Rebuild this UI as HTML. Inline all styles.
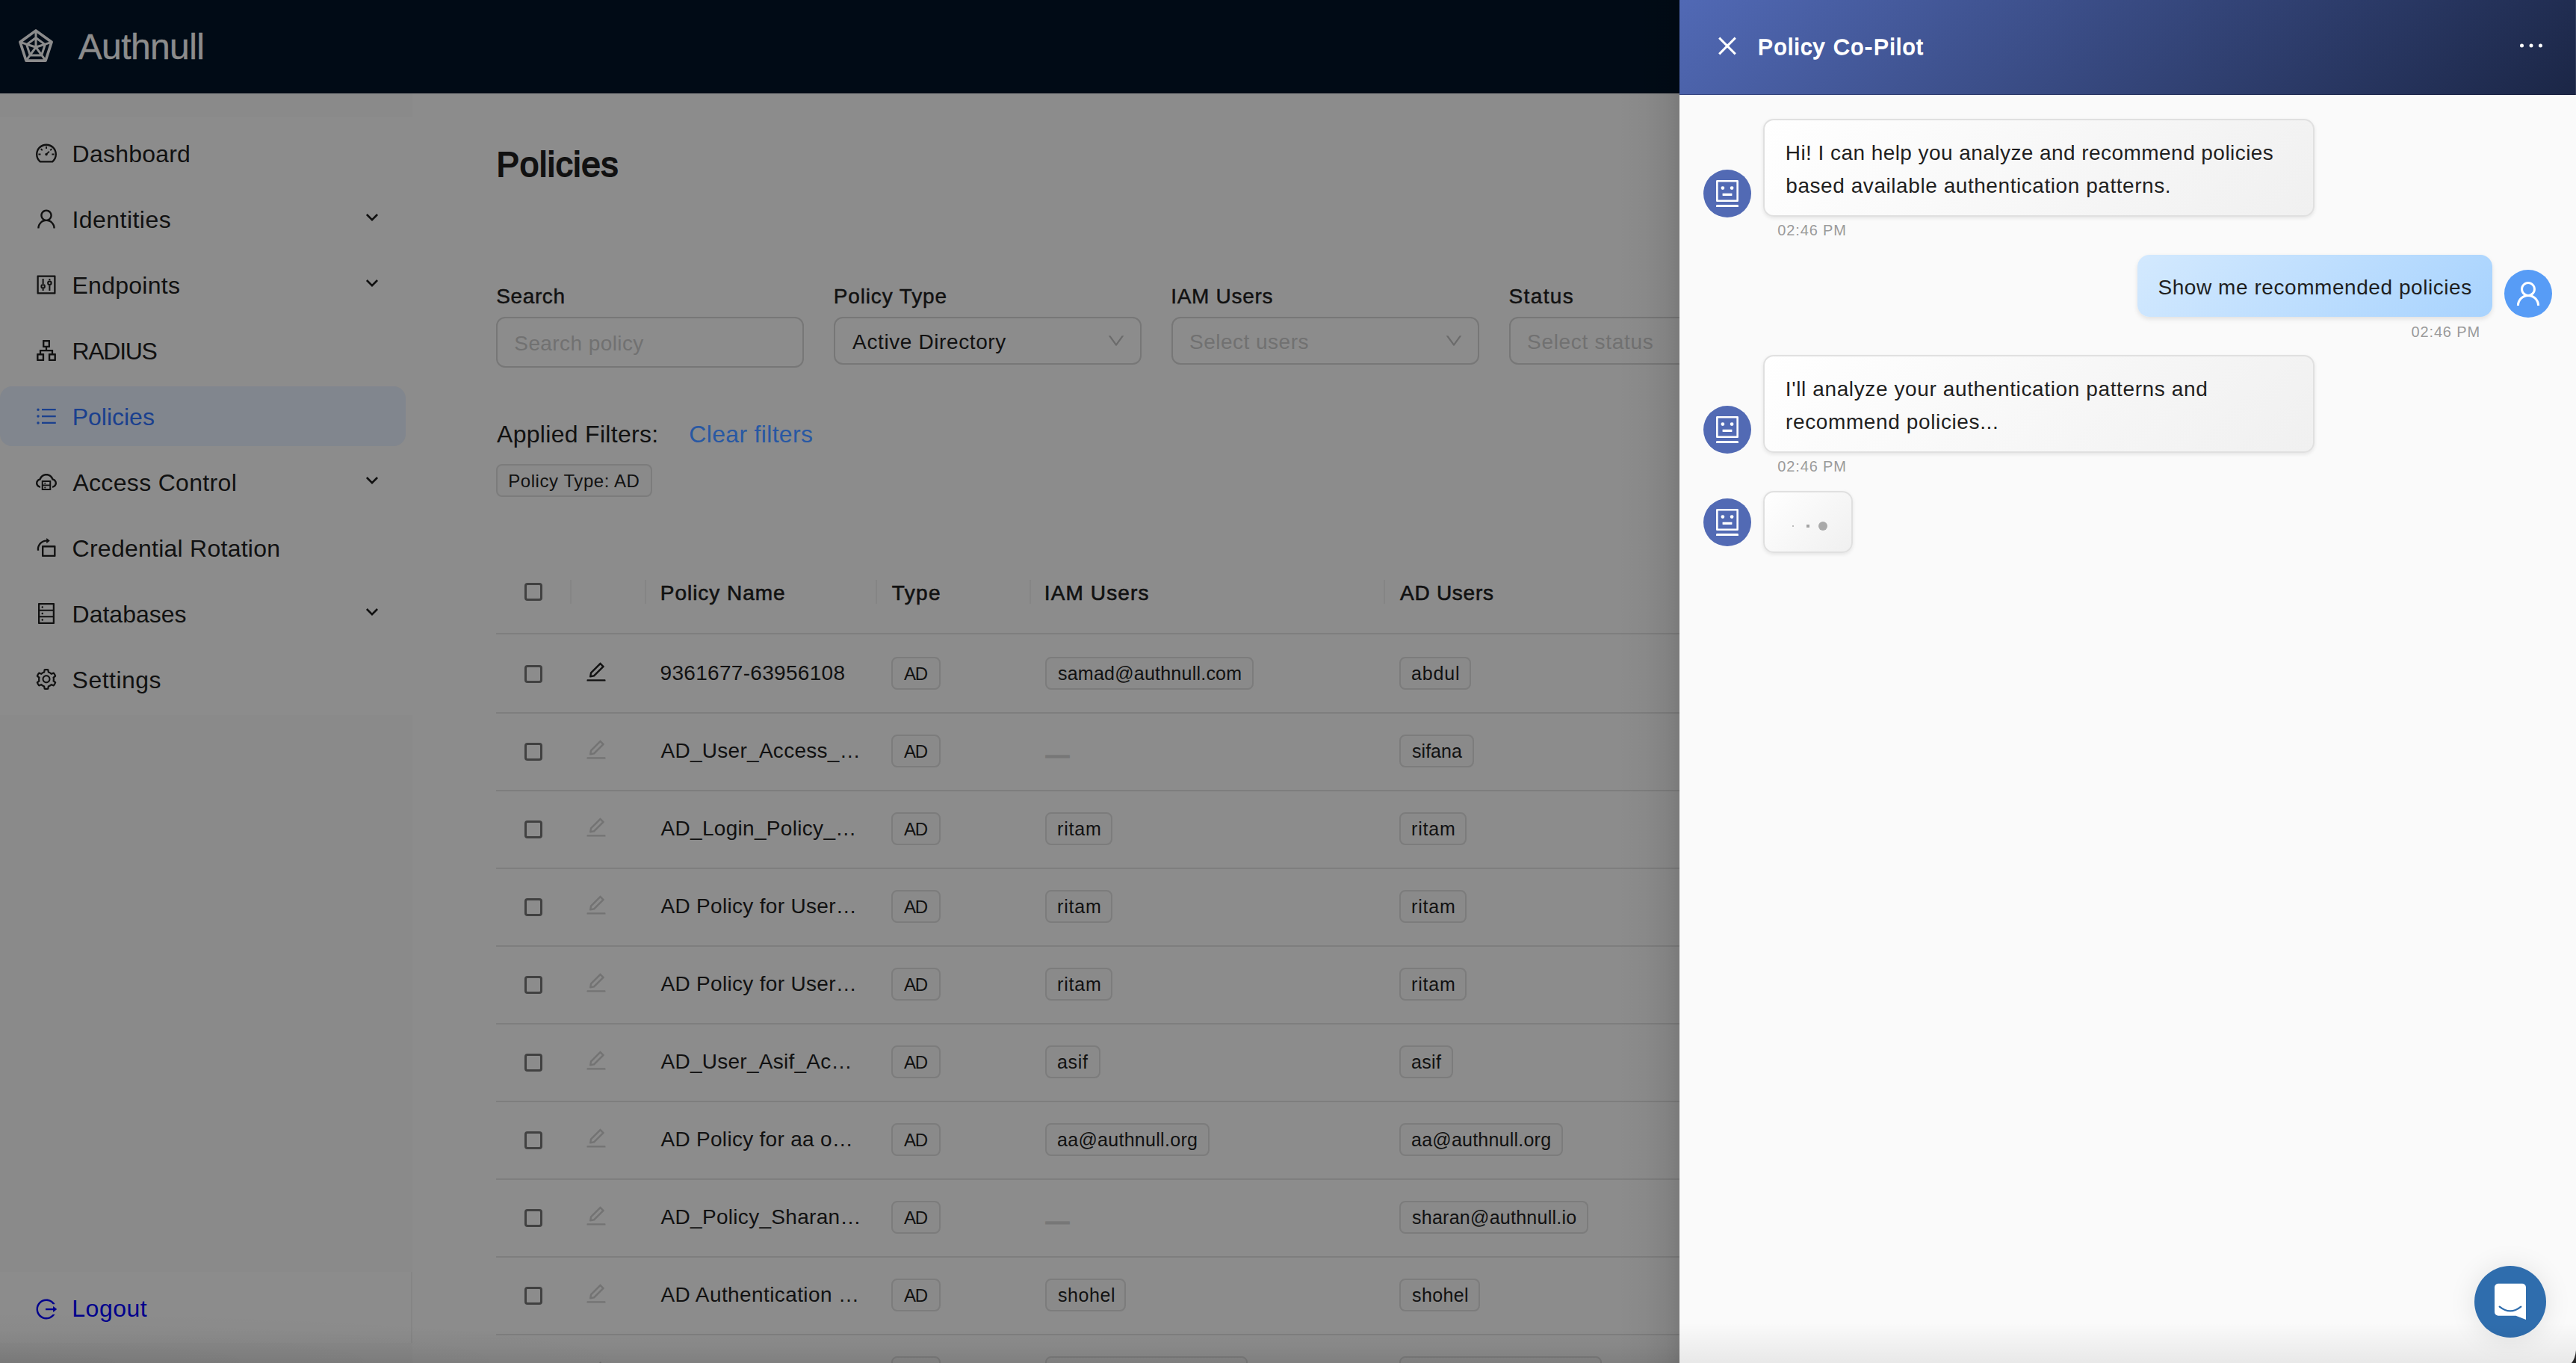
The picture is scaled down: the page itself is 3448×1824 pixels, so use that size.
<!DOCTYPE html>
<html lang="en"><head><meta charset="utf-8"><title>Authnull - Policies</title><style>
html,body{margin:0;padding:0}
body{width:3448px;height:1824px;overflow:hidden;background:#8c8c8c;font-family:"Liberation Sans",sans-serif;position:relative}
.a{position:absolute}
.bx{box-sizing:border-box}
.ic{position:absolute;display:block;overflow:visible}
.t{position:absolute;margin:0;white-space:pre;line-height:1;font-weight:400;text-decoration:none;font-kerning:normal}
</style></head><body>
<header class="topbar">
<div class="a bar" style="left:0px;top:0px;width:2248px;height:125px;background:#010b16"></div>
<svg class="ic logo" style="left:24px;top:37px;width:48px;height:48px" viewBox="64 64 896 896" fill="#8c8c8c" fill-rule="evenodd" ><path d="M926.8 397.1l-396-288a31.81 31.81 0 00-37.6 0l-396 288a31.99 31.99 0 00-11.600 35.800l151.300 466a32 32 0 0030.400 22.100h489.500c13.900 0 26.100-8.900 30.400-22.100l151.300-466c4.200-13.200-.5-27.600-11.700-35.800zM838.600 417l-98.500 32-200-144.700V199.900L838.600 417zM466 567.200l-89.100 122.300-55.200-169.200L466 567.200zm-116.300-96.800L484 373.300v140.800l-134.300-43.700zM512 599.200l93.900 128.900H418.100L512 599.200zm28.100-225.900l134.200 97.100L540.100 514V373.300zM558 567.200l144.300-46.900-55.200 169.200L558 567.200zm-74-367.300v104.400L283.900 449l-98.500-32L484 199.900zM169.300 470.800l86.500 28.100 80.400 246.400-53.800 73.900-113.100-348.400zM327.100 853l50.300-69h269.300l50.300 69H327.100zm414.500-33.800l-53.800-73.900 80.400-246.400 86.500-28.100-113.100 348.400z"/></svg>
<span class="t brand" style="left:104.7px;top:39px;font-size:48px;color:#8c8c8c;letter-spacing:-0.61px;-webkit-text-stroke:0.4px #8c8c8c;">Authnull</span>
</header>
<nav class="sider">
<div class="a sider-bg" style="left:0px;top:125px;width:552px;height:1699px;background:#8a8a8a"></div>
<div class="a menu-bg" style="left:0px;top:157px;width:552px;height:800px;background:#8c8c8c"></div>
<div class="a menu-selected" style="left:0px;top:517px;width:543px;height:80px;background:#81868e;border-radius:16px"></div>
<svg class="ic " style="left:48px;top:191px;width:28px;height:28px" viewBox="64 64 896 896" fill="#111111" fill-rule="evenodd" ><path d="M924.8 385.600a446.700 446.700 0 00-96-142.400 446.700 446.700 0 00-142.400-96C631.100 123.800 572.500 112 512 112s-119.100 11.800-174.400 35.200a446.700 446.700 0 00-142.400 96 446.700 446.700 0 00-96 142.400C75.800 440.900 64 499.500 64 560c0 132.700 58.300 257.700 159.900 343.100l1.700 1.400c5.800 4.800 13.100 7.500 20.600 7.500h531.700c7.500 0 14.800-2.700 20.600-7.500l1.700-1.400C901.700 817.700 960 692.700 960 560c0-60.500-11.900-119.100-35.200-174.400zM761.400 836H262.600A371.120 371.120 0 01140 560c0-99.400 38.700-192.800 109-263 70.300-70.300 163.700-109 263-109 99.400 0 192.800 38.700 263 109 70.300 70.300 109 163.700 109 263 0 105.600-44.500 205.500-122.600 276zM623.500 421.500a8.030 8.030 0 00-11.300 0L527.700 506c-18.700-5-39.400-.2-54.100 14.500a55.950 55.950 0 000 79.200 55.950 55.950 0 0079.200 0 55.870 55.870 0 0014.500-54.100l84.500-84.500c3.100-3.100 3.100-8.200 0-11.300l-28.300-28.300zM490 320h44c4.400 0 8-3.600 8-8v-80c0-4.400-3.600-8-8-8h-44c-4.400 0-8 3.600-8 8v80c0 4.400 3.600 8 8 8zm260 218v44c0 4.400 3.600 8 8 8h80c4.400 0 8-3.600 8-8v-44c0-4.400-3.600-8-8-8h-80c-4.400 0-8 3.600-8 8zm12.700-197.200l-31.100-31.100a8.030 8.030 0 00-11.300 0l-56.600 56.600a8.030 8.030 0 000 11.300l31.100 31.100c3.100 3.100 8.200 3.100 11.300 0l56.600-56.600c3.100-3.100 3.100-8.200 0-11.300zm-458.600-31.100a8.030 8.030 0 00-11.300 0l-31.100 31.100a8.030 8.030 0 000 11.300l56.600 56.600c3.100 3.100 8.200 3.100 11.300 0l31.100-31.100c3.100-3.100 3.100-8.200 0-11.300l-56.600-56.600zM262 530h-80c-4.400 0-8 3.600-8 8v44c0 4.400 3.600 8 8 8h80c4.400 0 8-3.600 8-8v-44c0-4.400-3.600-8-8-8z"/></svg>
<span class="t menu-item" style="left:96.6px;top:190px;font-size:32px;color:#111111;letter-spacing:0.21px;">Dashboard</span>
<svg class="ic " style="left:48px;top:279px;width:28px;height:28px" viewBox="64 64 896 896" fill="#111111" fill-rule="evenodd" ><path d="M858.500 763.600a374 374 0 00-80.600-119.500 375.630 375.630 0 00-119.500-80.600c-.4-.2-.8-.3-1.200-.5C719.500 518 760 444.700 760 362c0-137-111-248-248-248S264 225 264 362c0 82.700 40.500 156 102.800 201.100-.4.200-.8.300-1.200.5-44.800 18.900-85 46-119.500 80.600a375.630 375.630 0 00-80.600 119.500A371.700 371.700 0 00136 901.800a8 8 0 008 8.200h60c4.400 0 7.900-3.500 8-7.800 2-77.200 33-149.500 87.800-204.300 56.700-56.700 132-87.900 212.200-87.900s155.500 31.200 212.200 87.900C779 752.700 810 825 812 902.200c.1 4.400 3.600 7.800 8 7.800h60a8 8 0 008-8.200c-1-47.800-10.900-94.300-29.500-138.200zM512 534c-45.900 0-89.100-17.900-121.600-50.400S340 407.900 340 362c0-45.900 17.900-89.100 50.400-121.600S466.100 190 512 190s89.100 17.900 121.600 50.400S684 316.100 684 362c0 45.900-17.900 89.100-50.400 121.600S557.900 534 512 534z"/></svg>
<span class="t menu-item" style="left:96.4px;top:278px;font-size:32px;color:#111111;letter-spacing:0.47px;">Identities</span>
<svg class="ic" style="left:486px;top:281px;width:24px;height:20px" viewBox="0 0 24 20"><path d="M4.9 6L12 13.100L19.100 6" fill="none" stroke="#111111" stroke-width="2.600"/></svg>
<svg class="ic " style="left:48px;top:367px;width:28px;height:28px" viewBox="64 64 896 896" fill="#111111" fill-rule="evenodd" ><path d="M880 112H144c-17.700 0-32 14.300-32 32v736c0 17.700 14.300 32 32 32h736c17.700 0 32-14.300 32-32V144c0-17.700-14.300-32-32-32zm-40 728H184V184h656v656zM340 256h64v236h-64zM340 676h64v92h-64zM620 256h64v92h-64zM620 532h64v236h-64zM372 480a104 104 0 100 208 104 104 0 100-208zm0 64a40 40 0 110 80 40 40 0 110-80zM652 336a104 104 0 100 208 104 104 0 100-208zm0 64a40 40 0 110 80 40 40 0 110-80z"/></svg>
<span class="t menu-item" style="left:96.5px;top:366px;font-size:32px;color:#111111;letter-spacing:0.26px;">Endpoints</span>
<svg class="ic" style="left:486px;top:369px;width:24px;height:20px" viewBox="0 0 24 20"><path d="M4.9 6L12 13.100L19.100 6" fill="none" stroke="#111111" stroke-width="2.600"/></svg>
<svg class="ic " style="left:48px;top:455px;width:28px;height:28px" viewBox="64 64 896 896" fill="#111111" fill-rule="evenodd" ><path d="M908 640H804V488c0-4.400-3.600-8-8-8H548v-96h108c8.800 0 16-7.200 16-16V80c0-8.800-7.200-16-16-16H368c-8.800 0-16 7.200-16 16v288c0 8.800 7.200 16 16 16h108v96H228c-4.400 0-8 3.600-8 8v152H116c-8.800 0-16 7.200-16 16v288c0 8.800 7.200 16 16 16h288c8.800 0 16-7.200 16-16V656c0-8.800-7.200-16-16-16H292v-88h440v88H620c-8.800 0-16 7.200-16 16v288c0 8.800 7.200 16 16 16h288c8.800 0 16-7.200 16-16V656c0-8.800-7.200-16-16-16zm-564 76v168H176V716h168zm84-408V140h168v168H428zm420 576H680V716h168v168z"/></svg>
<span class="t menu-item" style="left:96.5px;top:454px;font-size:32px;color:#111111;letter-spacing:-1.29px;">RADIUS</span>
<svg class="ic " style="left:48px;top:543px;width:28px;height:28px" viewBox="64 64 896 896" fill="#1a408e" fill-rule="evenodd" ><path d="M912 192H328c-4.400 0-8 3.600-8 8v56c0 4.400 3.600 8 8 8h584c4.400 0 8-3.600 8-8v-56c0-4.400-3.600-8-8-8zm0 284H328c-4.400 0-8 3.600-8 8v56c0 4.400 3.600 8 8 8h584c4.400 0 8-3.600 8-8v-56c0-4.400-3.600-8-8-8zm0 284H328c-4.400 0-8 3.600-8 8v56c0 4.400 3.600 8 8 8h584c4.400 0 8-3.600 8-8v-56c0-4.400-3.600-8-8-8zM104 228a56 56 0 10112 0 56 56 0 10-112 0zm0 284a56 56 0 10112 0 56 56 0 10-112 0zm0 284a56 56 0 10112 0 56 56 0 10-112 0z"/></svg>
<span class="t menu-item" style="left:96.7px;top:542px;font-size:32px;color:#1a408e;letter-spacing:-0.01px;">Policies</span>
<svg class="ic " style="left:48px;top:631px;width:28px;height:28px" viewBox="64 64 896 896" fill="#111111" fill-rule="evenodd" ><path d="M704 446H320c-4.400 0-8 3.600-8 8v402c0 4.400 3.600 8 8 8h384c4.400 0 8-3.600 8-8V454c0-4.400-3.600-8-8-8zm-328 64h272v117H376V510zm272 290H376V683h272v117zM424 748a32 32 0 1064 0 32 32 0 10-64 0zm0-178a32 32 0 1064 0 32 32 0 10-64 0zM811.400 368.900C765.600 248 648.900 162 512.200 162S258.800 247.900 213 368.800C126.900 391.500 63.500 470.200 64 563.600 64.600 668 145.600 752.900 247.600 762c4.700.4 8.700-3.300 8.700-8v-60.400c0-4-3-7.400-7-7.900-27-3.400-52.500-15.200-72.100-34.500-24-23.500-37.200-55.100-37.200-88.600 0-28 9.100-54.400 26.200-76.400 16.700-21.400 40.200-36.900 66.100-43.700l37.900-10 13.900-36.700c8.600-22.800 20.600-44.200 35.700-63.500 14.900-19.200 32.600-36 52.400-50 41.100-28.900 89.500-44.200 140-44.200s98.900 15.300 140 44.300c19.900 14 37.500 30.800 52.400 50 15.100 19.300 27.100 40.700 35.700 63.500l13.800 36.600 37.800 10c54.200 14.400 92.100 63.700 92.100 120 0 33.600-13.200 65.100-37.200 88.600-19.500 19.200-44.900 31.100-71.900 34.500-4 .5-6.900 3.900-6.900 7.900V754c0 4.700 4.100 8.400 8.800 8 101.700-9.200 182.500-94 183.200-198.200.6-93.400-62.700-172.100-148.600-194.900z"/></svg>
<span class="t menu-item" style="left:97.4px;top:630px;font-size:32px;color:#111111;letter-spacing:0.32px;">Access Control</span>
<svg class="ic" style="left:486px;top:633px;width:24px;height:20px" viewBox="0 0 24 20"><path d="M4.9 6L12 13.100L19.100 6" fill="none" stroke="#111111" stroke-width="2.600"/></svg>
<svg class="ic " style="left:48px;top:719px;width:28px;height:28px" viewBox="64 64 896 896" fill="#111111" fill-rule="evenodd" transform="scale(-1,1)"><path d="M672 418H144c-17.700 0-32 14.300-32 32v414c0 17.700 14.300 32 32 32h528c17.700 0 32-14.300 32-32V450c0-17.700-14.300-32-32-32zm-44 402H188V494h440v326zM819.300 328.500c-78.800-100.700-196-153.600-314.600-154.200l-.2-64c0-6.500-7.600-10.100-12.600-6.100l-128 101c-4 3.100-3.900 9.100 0 12.300L492 318.600c5.100 4 12.700.4 12.600-6.100v-63.900c12.900.1 25.900.9 38.800 2.500 42.100 5.200 82.100 18.200 119 38.700 38.100 21.200 71.200 49.700 98.400 84.300 27.100 34.700 46.700 73.700 58.100 115.800a325.950 325.950 0 016.500 140.900h74.900c14.800-103.600-11.300-213-81-302.300z"/></svg>
<span class="t menu-item" style="left:96.6px;top:718px;font-size:32px;color:#111111;letter-spacing:0.25px;">Credential Rotation</span>
<svg class="ic " style="left:48px;top:807px;width:28px;height:28px" viewBox="64 64 896 896" fill="#111111" fill-rule="evenodd" ><path d="M832 64H192c-17.700 0-32 14.300-32 32v832c0 17.700 14.300 32 32 32h640c17.700 0 32-14.300 32-32V96c0-17.700-14.300-32-32-32zm-600 72h560v208H232V136zm560 480H232V408h560v208zm0 272H232V680h560v208zM304 240a40 40 0 1080 0 40 40 0 10-80 0zm0 272a40 40 0 1080 0 40 40 0 10-80 0zm0 272a40 40 0 1080 0 40 40 0 10-80 0z"/></svg>
<span class="t menu-item" style="left:96.6px;top:806px;font-size:32px;color:#111111;letter-spacing:-0.01px;">Databases</span>
<svg class="ic" style="left:486px;top:809px;width:24px;height:20px" viewBox="0 0 24 20"><path d="M4.9 6L12 13.100L19.100 6" fill="none" stroke="#111111" stroke-width="2.600"/></svg>
<svg class="ic " style="left:48px;top:895px;width:28px;height:28px" viewBox="64 64 896 896" fill="#111111" fill-rule="evenodd" ><path d="M924.8 625.700l-65.500-56c3.100-19 4.700-38.400 4.700-57.800s-1.600-38.800-4.700-57.800l65.500-56a32.030 32.030 0 009.300-35.200l-.9-2.600a442.090 442.090 0 00-79.700-137.900l-1.800-2.100a32.120 32.120 0 00-35.100-9.500l-81.300 28.900c-30-24.600-63.500-44-99.700-57.600l-15.700-85a32.050 32.050 0 00-25.800-25.700l-2.700-.5c-52.100-9.400-106.900-9.400-159 0l-2.700.5a32.050 32.050 0 00-25.800 25.700l-15.800 85.400a351.860 351.860 0 00-99 57.400l-81.900-29.100a32 32 0 00-35.100 9.500l-1.800 2.100a446.020 446.020 0 00-79.700 137.900l-.9 2.600c-4.500 12.500-.8 26.500 9.300 35.200l66.300 56.600c-3.100 18.800-4.600 38-4.600 57.100 0 19.200 1.500 38.400 4.600 57.100L99 625.500a32.030 32.030 0 00-9.300 35.200l.9 2.600c18.100 50.400 44.900 96.900 79.700 137.900l1.800 2.100a32.120 32.120 0 0035.100 9.500l81.900-29.100c29.800 24.500 63.100 43.900 99 57.400l15.800 85.400a32.050 32.050 0 0025.800 25.700l2.700.5a449.400 449.400 0 00159 0l2.700-.5a32.050 32.050 0 0025.800-25.700l15.700-85a350 350 0 0099.700-57.600l81.300 28.900a32 32 0 0035.100-9.500l1.800-2.100c34.800-41.100 61.600-87.500 79.700-137.900l.9-2.600c4.500-12.300.8-26.300-9.300-35zM788.300 465.900c2.500 15.100 3.800 30.600 3.800 46.100s-1.300 31-3.800 46.100l-6.600 40.100 74.700 63.900a370.030 370.030 0 01-42.600 73.600L721 702.800l-31.400 25.800c-23.900 19.600-50.500 35-79.300 45.800l-38.100 14.300-17.900 97a377.500 377.500 0 01-85 0l-17.900-97.200-37.800-14.500c-28.500-10.800-55-26.200-78.700-45.700l-31.400-25.900-93.400 33.200c-17-22.900-31.200-47.600-42.600-73.600l75.500-64.500-6.500-40c-2.400-14.900-3.700-30.300-3.700-45.500 0-15.300 1.200-30.600 3.700-45.500l6.500-40-75.500-64.500c11.300-26.100 25.600-50.700 42.600-73.600l93.400 33.200 31.400-25.900c23.700-19.500 50.200-34.900 78.700-45.700l37.900-14.300 17.900-97.200c28.100-3.200 56.800-3.200 85 0l17.900 97 38.100 14.300c28.700 10.800 55.400 26.200 79.300 45.800l31.400 25.800 92.800-32.900c17 22.900 31.200 47.600 42.600 73.600L781.800 426l6.500 39.900zM512 326c-97.200 0-176 78.800-176 176s78.800 176 176 176 176-78.800 176-176-78.800-176-176-176zm79.200 255.200A111.600 111.600 0 01512 614c-29.900 0-58-11.700-79.200-32.800A111.600 111.600 0 01400 502c0-29.900 11.700-58 32.800-79.200C454 401.600 482.100 390 512 390c29.900 0 58 11.600 79.200 32.800A111.600 111.600 0 01624 502c0 29.900-11.700 58-32.800 79.200z"/></svg>
<span class="t menu-item" style="left:96.6px;top:894px;font-size:32px;color:#111111;letter-spacing:0.48px;">Settings</span>
<div class="a bx logout-bg" style="left:0px;top:1702px;width:552px;height:95px;background:#8c8c8c;border-right:2px solid #858585"></div>
<svg class="ic " style="left:48px;top:1738px;width:28px;height:28px" viewBox="64 64 896 896" fill="#00008c" fill-rule="evenodd" ><path d="M868 732h-70.300c-4.800 0-9.300 2.100-12.300 5.800-7 8.500-14.500 16.700-22.400 24.500a353.840 353.840 0 01-112.700 75.900A352.800 352.800 0 01512.400 866c-47.900 0-94.300-9.400-137.900-27.800a353.840 353.840 0 01-112.700-75.900 353.280 353.280 0 01-76-112.500C167.300 606.200 158 559.900 158 512s9.400-94.200 27.800-137.800c17.800-42.100 43.400-80 76-112.500s70.500-58.100 112.700-75.900c43.600-18.400 90-27.800 137.900-27.800 47.900 0 94.300 9.300 137.900 27.800 42.200 17.800 80.100 43.400 112.700 75.900 7.900 7.900 15.300 16.100 22.400 24.500 3 3.700 7.600 5.800 12.300 5.800H868c6.300 0 10.200-7 6.700-12.300C798 160.500 663.800 81.600 511.300 82 271.700 82.600 79.600 277.100 82 516.400 84.400 751.900 276.200 942 512.400 942c152.100 0 285.700-78.800 362.300-197.700 3.400-5.300-.4-12.300-6.700-12.300zm88.900-226.300L815 393.700c-5.300-4.200-13-.4-13 6.300v76H488c-4.400 0-8 3.600-8 8v56c0 4.400 3.600 8 8 8h314v76c0 6.700 7.800 10.500 13 6.300l141.900-112a8 8 0 000-12.600z"/></svg>
<span class="t menu-item" style="left:96.3px;top:1735px;font-size:32px;color:#00008c;letter-spacing:0.5px;">Logout</span>
</nav>
<main class="content">
<h1 class="t" style="left:664.4px;top:197px;font-size:46px;color:#111111;letter-spacing:0.64px;-webkit-text-stroke:1.9px #111111;">Policies</h1>
<label class="t" style="left:664.2px;top:383px;font-size:28px;color:#111111;letter-spacing:0.63px;-webkit-text-stroke:0.45px #111111;">Search</label>
<label class="t" style="left:1115.7px;top:383px;font-size:28px;color:#111111;letter-spacing:0.87px;-webkit-text-stroke:0.45px #111111;">Policy Type</label>
<label class="t" style="left:1567.25px;top:383px;font-size:28px;color:#111111;letter-spacing:0.7px;-webkit-text-stroke:0.45px #111111;">IAM Users</label>
<label class="t" style="left:2019.5px;top:383px;font-size:28px;color:#111111;letter-spacing:1.38px;-webkit-text-stroke:0.45px #111111;">Status</label>
<div class="a bx input" style="left:664px;top:424px;width:412px;height:68px;border:2px solid #777777;border-radius:12px"></div>
<span class="t placeholder" style="left:688.3px;top:446px;font-size:28px;color:#717171;letter-spacing:0.41px;">Search policy</span>
<div class="a bx select" style="left:1116px;top:424px;width:412px;height:64px;border:2px solid #777777;border-radius:12px"></div>
<svg class="ic " style="left:1482px;top:444px;width:24px;height:24px" viewBox="64 64 896 896" fill="#6b6b6b" fill-rule="evenodd" ><path d="M884 256h-75c-5.100 0-9.900 2.400-12.900 6.500L512 654.200 227.900 262.500c-3-4.100-7.800-6.500-12.900-6.500h-75c-6.500 0-10.300 7.400-6.500 12.700l352.600 486.100c12.800 17.600 39 17.600 51.700 0l352.600-486.100c3.900-5.300.1-12.700-6.400-12.700z"/></svg>
<div class="a bx select" style="left:1568px;top:424px;width:412px;height:64px;border:2px solid #777777;border-radius:12px"></div>
<svg class="ic " style="left:1934px;top:444px;width:24px;height:24px" viewBox="64 64 896 896" fill="#6b6b6b" fill-rule="evenodd" ><path d="M884 256h-75c-5.100 0-9.900 2.400-12.900 6.500L512 654.200 227.900 262.500c-3-4.100-7.800-6.500-12.900-6.500h-75c-6.500 0-10.300 7.400-6.500 12.700l352.600 486.100c12.800 17.600 39 17.600 51.700 0l352.600-486.100c3.900-5.300.1-12.700-6.400-12.700z"/></svg>
<div class="a bx select" style="left:2020px;top:424px;width:412px;height:64px;border:2px solid #777777;border-radius:12px"></div>
<span class="t" style="left:1141.1px;top:444px;font-size:28px;color:#111111;letter-spacing:0.61px;">Active Directory</span>
<span class="t placeholder" style="left:1592px;top:444px;font-size:28px;color:#717171;letter-spacing:0.49px;">Select users</span>
<span class="t placeholder" style="left:2044px;top:444px;font-size:28px;color:#717171;letter-spacing:0.7px;">Select status</span>
<span class="t" style="left:665px;top:565px;font-size:32px;color:#111111;letter-spacing:0.3px;">Applied Filters:</span>
<a class="t" style="left:922.3px;top:565px;font-size:32px;color:#2858a3;letter-spacing:0.32px;">Clear filters</a>
<div class="a bx tag" style="left:664px;top:621px;width:209px;height:44px;border:2px solid #7c7c7c;border-radius:8px;background:#8a8a8a"></div>
<span class="t tag-text" style="left:680.2px;top:632px;font-size:24px;color:#111111;letter-spacing:0.57px;">Policy Type: AD</span>
<div class="thead">
<div class="a bx checkbox" style="left:702px;top:780px;width:24px;height:24px;border:3px solid #414141;border-radius:4px"></div>
<div class="a col-sep" style="left:763px;top:776px;width:2px;height:32px;background:#858585"></div>
<div class="a col-sep" style="left:863px;top:776px;width:2px;height:32px;background:#858585"></div>
<div class="a col-sep" style="left:1172px;top:776px;width:2px;height:32px;background:#858585"></div>
<div class="a col-sep" style="left:1378px;top:776px;width:2px;height:32px;background:#858585"></div>
<div class="a col-sep" style="left:1852px;top:776px;width:2px;height:32px;background:#858585"></div>
<span class="t th" style="left:883.8px;top:780px;font-size:28px;color:#111111;letter-spacing:0.96px;-webkit-text-stroke:0.6px #111111;">Policy Name</span>
<span class="t th" style="left:1193.75px;top:780px;font-size:28px;color:#111111;letter-spacing:1.37px;-webkit-text-stroke:0.6px #111111;">Type</span>
<span class="t th" style="left:1397.75px;top:780px;font-size:28px;color:#111111;letter-spacing:1.13px;-webkit-text-stroke:0.6px #111111;">IAM Users</span>
<span class="t th" style="left:1874px;top:780px;font-size:28px;color:#111111;letter-spacing:0.74px;-webkit-text-stroke:0.6px #111111;">AD Users</span>
<div class="a row-line" style="left:664px;top:847px;width:1584px;height:2px;background:#7e7e7e"></div>
</div>
<div class="tr">
<div class="a row-line" style="left:664px;top:953px;width:1584px;height:2px;background:#7e7e7e"></div>
<div class="a bx checkbox" style="left:702px;top:890px;width:24px;height:24px;border:3px solid #414141;border-radius:4px"></div>
<svg class="ic " style="left:784px;top:885px;width:28px;height:28px" viewBox="64 64 896 896" fill="#111111" fill-rule="evenodd" ><path d="M257.700 752c2 0 4-.2 6-.5L431.900 722c2-.4 3.900-1.300 5.300-2.800l423.900-423.900a9.960 9.960 0 000-14.100L694.900 114.900c-1.900-1.900-4.400-2.900-7.100-2.900s-5.200 1-7.100 2.900L256.800 538.800c-1.500 1.500-2.400 3.300-2.800 5.300l-29.500 168.200a33.500 33.500 0 009.400 29.800c6.600 6.400 14.900 9.900 23.800 9.900zm67.400-174.400L687.800 215l73.300 73.300-362.700 362.600-88.900 15.700 15.600-89zM880 836H144c-17.700 0-32 14.300-32 32v36c0 4.400 3.600 8 8 8h784c4.400 0 8-3.600 8-8v-36c0-17.700-14.300-32-32-32z"/></svg>
<span class="t td" style="left:883.5px;top:887px;font-size:28px;color:#111111;letter-spacing:0.31px;">9361677-63956108</span>
<div class="a bx tag" style="left:1193px;top:879px;width:66px;height:44px;border:2px solid #7c7c7c;border-radius:8px;background:#8a8a8a"></div>
<span class="t tag-text" style="left:1209.9px;top:890px;font-size:24px;color:#111111;letter-spacing:-1.21px;">AD</span>
<div class="a bx tag" style="left:1399px;top:879px;width:279px;height:44px;border:2px solid #7c7c7c;border-radius:8px;background:#8a8a8a"></div>
<span class="t tag-text" style="left:1416px;top:889px;font-size:25px;color:#111111;letter-spacing:0.23px;">samad@authnull.com</span>
<div class="a bx tag" style="left:1873px;top:879px;width:96px;height:44px;border:2px solid #7c7c7c;border-radius:8px;background:#8a8a8a"></div>
<span class="t tag-text" style="left:1889px;top:889px;font-size:25px;color:#111111;letter-spacing:0.85px;">abdul</span>
</div>
<div class="tr">
<div class="a row-line" style="left:664px;top:1057px;width:1584px;height:2px;background:#7e7e7e"></div>
<div class="a bx checkbox" style="left:702px;top:994px;width:24px;height:24px;border:3px solid #414141;border-radius:4px"></div>
<svg class="ic " style="left:784px;top:989px;width:28px;height:28px" viewBox="64 64 896 896" fill="#737373" fill-rule="evenodd" ><path d="M257.700 752c2 0 4-.2 6-.5L431.900 722c2-.4 3.900-1.300 5.300-2.800l423.900-423.900a9.960 9.960 0 000-14.100L694.900 114.900c-1.900-1.900-4.400-2.900-7.100-2.900s-5.200 1-7.100 2.900L256.800 538.800c-1.500 1.500-2.400 3.300-2.800 5.300l-29.500 168.200a33.500 33.500 0 009.400 29.800c6.600 6.400 14.900 9.900 23.800 9.900zm67.400-174.400L687.800 215l73.300 73.300-362.700 362.600-88.900 15.700 15.600-89zM880 836H144c-17.700 0-32 14.300-32 32v36c0 4.400 3.600 8 8 8h784c4.400 0 8-3.600 8-8v-36c0-17.700-14.300-32-32-32z"/></svg>
<span class="t td" style="left:884.5px;top:991px;font-size:28px;color:#111111;letter-spacing:0.28px;">AD_User_Access_…</span>
<div class="a bx tag" style="left:1193px;top:983px;width:66px;height:44px;border:2px solid #7c7c7c;border-radius:8px;background:#8a8a8a"></div>
<span class="t tag-text" style="left:1209.9px;top:994px;font-size:24px;color:#111111;letter-spacing:-1.21px;">AD</span>
<span class="t dash" style="left:1399.4px;top:994px;font-size:32px;color:#777777;font-weight:700;-webkit-text-stroke:0.8px #777777;">—</span>
<div class="a bx tag" style="left:1873px;top:983px;width:100px;height:44px;border:2px solid #7c7c7c;border-radius:8px;background:#8a8a8a"></div>
<span class="t tag-text" style="left:1890px;top:993px;font-size:25px;color:#111111;letter-spacing:0.04px;">sifana</span>
</div>
<div class="tr">
<div class="a row-line" style="left:664px;top:1161px;width:1584px;height:2px;background:#7e7e7e"></div>
<div class="a bx checkbox" style="left:702px;top:1098px;width:24px;height:24px;border:3px solid #414141;border-radius:4px"></div>
<svg class="ic " style="left:784px;top:1093px;width:28px;height:28px" viewBox="64 64 896 896" fill="#737373" fill-rule="evenodd" ><path d="M257.700 752c2 0 4-.2 6-.5L431.900 722c2-.4 3.900-1.300 5.300-2.800l423.900-423.900a9.960 9.960 0 000-14.100L694.900 114.900c-1.900-1.900-4.400-2.900-7.100-2.900s-5.200 1-7.100 2.900L256.800 538.800c-1.500 1.500-2.400 3.300-2.800 5.300l-29.500 168.200a33.500 33.500 0 009.400 29.800c6.600 6.400 14.900 9.900 23.800 9.900zm67.400-174.400L687.800 215l73.300 73.300-362.700 362.600-88.900 15.700 15.600-89zM880 836H144c-17.700 0-32 14.300-32 32v36c0 4.400 3.600 8 8 8h784c4.400 0 8-3.600 8-8v-36c0-17.700-14.300-32-32-32z"/></svg>
<span class="t td" style="left:884.5px;top:1095px;font-size:28px;color:#111111;letter-spacing:0.31px;">AD_Login_Policy_…</span>
<div class="a bx tag" style="left:1193px;top:1087px;width:66px;height:44px;border:2px solid #7c7c7c;border-radius:8px;background:#8a8a8a"></div>
<span class="t tag-text" style="left:1209.9px;top:1098px;font-size:24px;color:#111111;letter-spacing:-1.21px;">AD</span>
<div class="a bx tag" style="left:1399px;top:1087px;width:90px;height:44px;border:2px solid #7c7c7c;border-radius:8px;background:#8a8a8a"></div>
<span class="t tag-text" style="left:1415px;top:1097px;font-size:25px;color:#111111;letter-spacing:0.82px;">ritam</span>
<div class="a bx tag" style="left:1873px;top:1087px;width:90px;height:44px;border:2px solid #7c7c7c;border-radius:8px;background:#8a8a8a"></div>
<span class="t tag-text" style="left:1889px;top:1097px;font-size:25px;color:#111111;letter-spacing:0.82px;">ritam</span>
</div>
<div class="tr">
<div class="a row-line" style="left:664px;top:1265px;width:1584px;height:2px;background:#7e7e7e"></div>
<div class="a bx checkbox" style="left:702px;top:1202px;width:24px;height:24px;border:3px solid #414141;border-radius:4px"></div>
<svg class="ic " style="left:784px;top:1197px;width:28px;height:28px" viewBox="64 64 896 896" fill="#737373" fill-rule="evenodd" ><path d="M257.700 752c2 0 4-.2 6-.5L431.900 722c2-.4 3.900-1.300 5.300-2.800l423.900-423.900a9.960 9.960 0 000-14.100L694.900 114.900c-1.900-1.900-4.400-2.900-7.100-2.900s-5.200 1-7.100 2.900L256.800 538.800c-1.500 1.500-2.400 3.300-2.800 5.300l-29.500 168.200a33.500 33.500 0 009.400 29.800c6.600 6.400 14.900 9.900 23.800 9.900zm67.400-174.400L687.800 215l73.300 73.300-362.700 362.600-88.900 15.700 15.600-89zM880 836H144c-17.700 0-32 14.300-32 32v36c0 4.400 3.600 8 8 8h784c4.400 0 8-3.600 8-8v-36c0-17.700-14.300-32-32-32z"/></svg>
<span class="t td" style="left:884.5px;top:1199px;font-size:28px;color:#111111;letter-spacing:0.31px;">AD Policy for User…</span>
<div class="a bx tag" style="left:1193px;top:1191px;width:66px;height:44px;border:2px solid #7c7c7c;border-radius:8px;background:#8a8a8a"></div>
<span class="t tag-text" style="left:1209.9px;top:1202px;font-size:24px;color:#111111;letter-spacing:-1.21px;">AD</span>
<div class="a bx tag" style="left:1399px;top:1191px;width:90px;height:44px;border:2px solid #7c7c7c;border-radius:8px;background:#8a8a8a"></div>
<span class="t tag-text" style="left:1415px;top:1201px;font-size:25px;color:#111111;letter-spacing:0.82px;">ritam</span>
<div class="a bx tag" style="left:1873px;top:1191px;width:90px;height:44px;border:2px solid #7c7c7c;border-radius:8px;background:#8a8a8a"></div>
<span class="t tag-text" style="left:1889px;top:1201px;font-size:25px;color:#111111;letter-spacing:0.82px;">ritam</span>
</div>
<div class="tr">
<div class="a row-line" style="left:664px;top:1369px;width:1584px;height:2px;background:#7e7e7e"></div>
<div class="a bx checkbox" style="left:702px;top:1306px;width:24px;height:24px;border:3px solid #414141;border-radius:4px"></div>
<svg class="ic " style="left:784px;top:1301px;width:28px;height:28px" viewBox="64 64 896 896" fill="#737373" fill-rule="evenodd" ><path d="M257.700 752c2 0 4-.2 6-.5L431.900 722c2-.4 3.900-1.300 5.300-2.800l423.900-423.900a9.960 9.960 0 000-14.100L694.900 114.900c-1.900-1.900-4.400-2.900-7.100-2.900s-5.200 1-7.100 2.900L256.800 538.800c-1.500 1.500-2.400 3.300-2.800 5.300l-29.500 168.200a33.500 33.500 0 009.400 29.800c6.600 6.400 14.900 9.900 23.800 9.900zm67.400-174.400L687.800 215l73.300 73.300-362.700 362.600-88.900 15.700 15.600-89zM880 836H144c-17.700 0-32 14.300-32 32v36c0 4.400 3.600 8 8 8h784c4.400 0 8-3.600 8-8v-36c0-17.700-14.300-32-32-32z"/></svg>
<span class="t td" style="left:884.5px;top:1303px;font-size:28px;color:#111111;letter-spacing:0.31px;">AD Policy for User…</span>
<div class="a bx tag" style="left:1193px;top:1295px;width:66px;height:44px;border:2px solid #7c7c7c;border-radius:8px;background:#8a8a8a"></div>
<span class="t tag-text" style="left:1209.9px;top:1306px;font-size:24px;color:#111111;letter-spacing:-1.21px;">AD</span>
<div class="a bx tag" style="left:1399px;top:1295px;width:90px;height:44px;border:2px solid #7c7c7c;border-radius:8px;background:#8a8a8a"></div>
<span class="t tag-text" style="left:1415px;top:1305px;font-size:25px;color:#111111;letter-spacing:0.82px;">ritam</span>
<div class="a bx tag" style="left:1873px;top:1295px;width:90px;height:44px;border:2px solid #7c7c7c;border-radius:8px;background:#8a8a8a"></div>
<span class="t tag-text" style="left:1889px;top:1305px;font-size:25px;color:#111111;letter-spacing:0.82px;">ritam</span>
</div>
<div class="tr">
<div class="a row-line" style="left:664px;top:1473px;width:1584px;height:2px;background:#7e7e7e"></div>
<div class="a bx checkbox" style="left:702px;top:1410px;width:24px;height:24px;border:3px solid #414141;border-radius:4px"></div>
<svg class="ic " style="left:784px;top:1405px;width:28px;height:28px" viewBox="64 64 896 896" fill="#737373" fill-rule="evenodd" ><path d="M257.700 752c2 0 4-.2 6-.5L431.900 722c2-.4 3.900-1.300 5.300-2.800l423.900-423.900a9.960 9.960 0 000-14.100L694.900 114.900c-1.900-1.900-4.400-2.900-7.100-2.900s-5.200 1-7.100 2.900L256.800 538.800c-1.500 1.500-2.400 3.300-2.800 5.300l-29.500 168.200a33.500 33.500 0 009.400 29.800c6.600 6.400 14.900 9.900 23.800 9.900zm67.400-174.400L687.800 215l73.300 73.300-362.700 362.600-88.900 15.700 15.600-89zM880 836H144c-17.700 0-32 14.300-32 32v36c0 4.400 3.600 8 8 8h784c4.400 0 8-3.600 8-8v-36c0-17.700-14.300-32-32-32z"/></svg>
<span class="t td" style="left:884.5px;top:1407px;font-size:28px;color:#111111;letter-spacing:0.26px;">AD_User_Asif_Ac…</span>
<div class="a bx tag" style="left:1193px;top:1399px;width:66px;height:44px;border:2px solid #7c7c7c;border-radius:8px;background:#8a8a8a"></div>
<span class="t tag-text" style="left:1209.9px;top:1410px;font-size:24px;color:#111111;letter-spacing:-1.21px;">AD</span>
<div class="a bx tag" style="left:1399px;top:1399px;width:74px;height:44px;border:2px solid #7c7c7c;border-radius:8px;background:#8a8a8a"></div>
<span class="t tag-text" style="left:1415px;top:1409px;font-size:25px;color:#111111;letter-spacing:0.71px;">asif</span>
<div class="a bx tag" style="left:1873px;top:1399px;width:72px;height:44px;border:2px solid #7c7c7c;border-radius:8px;background:#8a8a8a"></div>
<span class="t tag-text" style="left:1889px;top:1409px;font-size:25px;color:#111111;letter-spacing:0.31px;">asif</span>
</div>
<div class="tr">
<div class="a row-line" style="left:664px;top:1577px;width:1584px;height:2px;background:#7e7e7e"></div>
<div class="a bx checkbox" style="left:702px;top:1514px;width:24px;height:24px;border:3px solid #414141;border-radius:4px"></div>
<svg class="ic " style="left:784px;top:1509px;width:28px;height:28px" viewBox="64 64 896 896" fill="#737373" fill-rule="evenodd" ><path d="M257.700 752c2 0 4-.2 6-.5L431.900 722c2-.4 3.900-1.300 5.300-2.800l423.900-423.900a9.960 9.960 0 000-14.100L694.900 114.900c-1.900-1.900-4.400-2.900-7.100-2.900s-5.200 1-7.100 2.900L256.800 538.800c-1.500 1.500-2.400 3.300-2.800 5.300l-29.500 168.200a33.500 33.500 0 009.400 29.800c6.600 6.400 14.900 9.900 23.800 9.900zm67.400-174.400L687.800 215l73.300 73.300-362.700 362.600-88.900 15.700 15.600-89zM880 836H144c-17.700 0-32 14.300-32 32v36c0 4.400 3.600 8 8 8h784c4.400 0 8-3.600 8-8v-36c0-17.700-14.300-32-32-32z"/></svg>
<span class="t td" style="left:884.5px;top:1511px;font-size:28px;color:#111111;letter-spacing:0.29px;">AD Policy for aa o…</span>
<div class="a bx tag" style="left:1193px;top:1503px;width:66px;height:44px;border:2px solid #7c7c7c;border-radius:8px;background:#8a8a8a"></div>
<span class="t tag-text" style="left:1209.9px;top:1514px;font-size:24px;color:#111111;letter-spacing:-1.21px;">AD</span>
<div class="a bx tag" style="left:1399px;top:1503px;width:220px;height:44px;border:2px solid #7c7c7c;border-radius:8px;background:#8a8a8a"></div>
<span class="t tag-text" style="left:1415px;top:1513px;font-size:25px;color:#111111;letter-spacing:0.29px;">aa@authnull.org</span>
<div class="a bx tag" style="left:1873px;top:1503px;width:219px;height:44px;border:2px solid #7c7c7c;border-radius:8px;background:#8a8a8a"></div>
<span class="t tag-text" style="left:1889px;top:1513px;font-size:25px;color:#111111;letter-spacing:0.23px;">aa@authnull.org</span>
</div>
<div class="tr">
<div class="a row-line" style="left:664px;top:1681px;width:1584px;height:2px;background:#7e7e7e"></div>
<div class="a bx checkbox" style="left:702px;top:1618px;width:24px;height:24px;border:3px solid #414141;border-radius:4px"></div>
<svg class="ic " style="left:784px;top:1613px;width:28px;height:28px" viewBox="64 64 896 896" fill="#737373" fill-rule="evenodd" ><path d="M257.700 752c2 0 4-.2 6-.5L431.900 722c2-.4 3.900-1.300 5.300-2.800l423.900-423.900a9.960 9.960 0 000-14.100L694.900 114.900c-1.900-1.900-4.400-2.900-7.100-2.900s-5.200 1-7.100 2.900L256.800 538.800c-1.500 1.500-2.400 3.300-2.800 5.300l-29.500 168.200a33.500 33.500 0 009.400 29.800c6.600 6.400 14.900 9.900 23.800 9.900zm67.400-174.400L687.800 215l73.300 73.300-362.700 362.600-88.900 15.700 15.600-89zM880 836H144c-17.700 0-32 14.300-32 32v36c0 4.400 3.600 8 8 8h784c4.400 0 8-3.600 8-8v-36c0-17.700-14.300-32-32-32z"/></svg>
<span class="t td" style="left:884.5px;top:1615px;font-size:28px;color:#111111;letter-spacing:0.31px;">AD_Policy_Sharan…</span>
<div class="a bx tag" style="left:1193px;top:1607px;width:66px;height:44px;border:2px solid #7c7c7c;border-radius:8px;background:#8a8a8a"></div>
<span class="t tag-text" style="left:1209.9px;top:1618px;font-size:24px;color:#111111;letter-spacing:-1.21px;">AD</span>
<span class="t dash" style="left:1399.4px;top:1618px;font-size:32px;color:#777777;font-weight:700;-webkit-text-stroke:0.8px #777777;">—</span>
<div class="a bx tag" style="left:1873px;top:1607px;width:253px;height:44px;border:2px solid #7c7c7c;border-radius:8px;background:#8a8a8a"></div>
<span class="t tag-text" style="left:1890px;top:1617px;font-size:25px;color:#111111;letter-spacing:0.26px;">sharan@authnull.io</span>
</div>
<div class="tr">
<div class="a row-line" style="left:664px;top:1785px;width:1584px;height:2px;background:#7e7e7e"></div>
<div class="a bx checkbox" style="left:702px;top:1722px;width:24px;height:24px;border:3px solid #414141;border-radius:4px"></div>
<svg class="ic " style="left:784px;top:1717px;width:28px;height:28px" viewBox="64 64 896 896" fill="#737373" fill-rule="evenodd" ><path d="M257.700 752c2 0 4-.2 6-.5L431.900 722c2-.4 3.900-1.300 5.300-2.800l423.900-423.900a9.960 9.960 0 000-14.100L694.900 114.900c-1.900-1.900-4.400-2.900-7.100-2.900s-5.200 1-7.100 2.900L256.800 538.800c-1.500 1.500-2.400 3.300-2.800 5.300l-29.500 168.200a33.500 33.500 0 009.400 29.800c6.600 6.400 14.900 9.900 23.800 9.900zm67.400-174.400L687.800 215l73.300 73.300-362.700 362.600-88.900 15.700 15.600-89zM880 836H144c-17.700 0-32 14.300-32 32v36c0 4.400 3.600 8 8 8h784c4.400 0 8-3.600 8-8v-36c0-17.700-14.300-32-32-32z"/></svg>
<span class="t td" style="left:884.5px;top:1719px;font-size:28px;color:#111111;letter-spacing:0.4px;">AD Authentication …</span>
<div class="a bx tag" style="left:1193px;top:1711px;width:66px;height:44px;border:2px solid #7c7c7c;border-radius:8px;background:#8a8a8a"></div>
<span class="t tag-text" style="left:1209.9px;top:1722px;font-size:24px;color:#111111;letter-spacing:-1.21px;">AD</span>
<div class="a bx tag" style="left:1399px;top:1711px;width:108px;height:44px;border:2px solid #7c7c7c;border-radius:8px;background:#8a8a8a"></div>
<span class="t tag-text" style="left:1416px;top:1721px;font-size:25px;color:#111111;letter-spacing:0.56px;">shohel</span>
<div class="a bx tag" style="left:1873px;top:1711px;width:108px;height:44px;border:2px solid #7c7c7c;border-radius:8px;background:#8a8a8a"></div>
<span class="t tag-text" style="left:1890px;top:1721px;font-size:25px;color:#111111;letter-spacing:0.4px;">shohel</span>
</div>
<div class="tr">
<div class="a row-line" style="left:664px;top:1889px;width:1584px;height:2px;background:#7e7e7e"></div>
<div class="a bx checkbox" style="left:702px;top:1826px;width:24px;height:24px;border:3px solid #414141;border-radius:4px"></div>
<svg class="ic " style="left:784px;top:1821px;width:28px;height:28px" viewBox="64 64 896 896" fill="#737373" fill-rule="evenodd" ><path d="M257.700 752c2 0 4-.2 6-.5L431.900 722c2-.4 3.900-1.300 5.300-2.800l423.900-423.900a9.960 9.960 0 000-14.100L694.900 114.900c-1.900-1.900-4.400-2.900-7.100-2.900s-5.200 1-7.100 2.900L256.800 538.800c-1.500 1.500-2.400 3.300-2.800 5.300l-29.500 168.200a33.500 33.500 0 009.400 29.800c6.600 6.400 14.900 9.900 23.800 9.900zm67.400-174.400L687.800 215l73.300 73.300-362.700 362.600-88.900 15.700 15.600-89zM880 836H144c-17.700 0-32 14.300-32 32v36c0 4.400 3.600 8 8 8h784c4.400 0 8-3.600 8-8v-36c0-17.700-14.300-32-32-32z"/></svg>
<div class="a bx tag" style="left:1193px;top:1815px;width:66px;height:44px;border:2px solid #7c7c7c;border-radius:8px;background:#8a8a8a"></div>
<div class="a bx tag" style="left:1399px;top:1815px;width:271px;height:44px;border:2px solid #7c7c7c;border-radius:8px;background:#8a8a8a"></div>
<div class="a bx tag" style="left:1873px;top:1815px;width:271px;height:44px;border:2px solid #7c7c7c;border-radius:8px;background:#8a8a8a"></div>
</div>
</main>
<div class="a shade" style="left:0px;top:1778px;width:2248px;height:46px;background:linear-gradient(to bottom,rgba(0,0,0,0),rgba(0,0,0,0.03) 50%,rgba(0,0,0,0.09))"></div>
<div class="a shade" style="left:0px;top:1744px;width:1000px;height:80px;background:radial-gradient(ellipse 900px 70px at 0 100%,rgba(0,0,0,0.045),rgba(0,0,0,0))"></div>
<div class="a drawer-shadow" style="left:2164px;top:0px;width:84px;height:1824px;background:linear-gradient(to right,rgba(0,0,0,0),rgba(0,0,0,0.025) 45%,rgba(0,0,0,0.065) 78%,rgba(0,0,0,0.125))"></div>
<aside class="drawer">
<div class="a drawer-body" style="left:2248px;top:0px;width:1200px;height:1824px;background:#fafafa"></div>
<div class="a drawer-header" style="left:2248px;top:0px;width:1200px;height:127px;background:linear-gradient(135deg,#5169b5 0%,#1b2646 100%)"></div>
<div class="a hdr-line" style="left:2248px;top:126px;width:1200px;height:1px;background:rgba(0,0,30,0.30)"></div>
<div class="a hdr-line" style="left:2248px;top:127px;width:1200px;height:1px;background:#fff"></div>
<div class="a edge" style="left:3447px;top:0px;width:1px;height:127px;background:rgba(255,255,255,0.10)"></div>
<svg class="ic" style="left:2296px;top:45px;width:32px;height:32px" viewBox="0 0 32 32"><path d="M5.2 5.600L26.800 27.400M26.800 5.600L5.200 27.400" stroke="#fff" stroke-width="3" fill="none"/></svg>
<h2 class="t" style="left:2352.9px;top:48px;font-size:30px;color:#fff;letter-spacing:1.83px;-webkit-text-stroke:1.4px #fff;">Policy Co-Pilot</h2>
<svg class="ic " style="left:3368px;top:41px;width:40px;height:40px" viewBox="64 64 896 896" fill="#fff" fill-rule="evenodd" ><path d="M176 511a56 56 0 10112 0 56 56 0 10-112 0zm280 0a56 56 0 10112 0 56 56 0 10-112 0zm280 0a56 56 0 10112 0 56 56 0 10-112 0z"/></svg>
<div class="msg bot">
<div class="a bx bubble" style="left:2360px;top:159px;width:738px;height:131px;border:2px solid #e0e0e0;border-radius:14px;background:linear-gradient(135deg,#fff 0%,#f0f0f0 100%);box-shadow:0 2px 5px rgba(0,0,0,0.09)"></div>
<div class="a avatar" style="left:2280px;top:227px;width:64px;height:64px;border-radius:50%;background:#526ab4"></div>
<svg class="ic " style="left:2294px;top:241px;width:36px;height:36px" viewBox="64 64 896 896" fill="#fff" fill-rule="evenodd" ><path d="M300 328a60 60 0 10120 0 60 60 0 10-120 0zM852 64H172c-17.700 0-32 14.300-32 32v660c0 17.700 14.300 32 32 32h680c17.700 0 32-14.300 32-32V96c0-17.700-14.300-32-32-32zm-32 660H204V128h616v596zM604 328a60 60 0 10120 0 60 60 0 10-120 0zm250.200 556H169.800c-16.500 0-29.800 14.300-29.800 32v36c0 4.400 3.300 8 7.400 8h729.100c4.100 0 7.400-3.600 7.400-8v-36c.1-17.700-13.200-32-29.700-32zM664 508H360c-4.400 0-8 3.600-8 8v60c0 4.400 3.600 8 8 8h304c4.400 0 8-3.600 8-8v-60c0-4.400-3.600-8-8-8z"/></svg>
<span class="t" style="left:2389.8px;top:191px;font-size:28px;color:#1f1f1f;letter-spacing:0.44px;">Hi! I can help you analyze and recommend policies</span>
<span class="t" style="left:2390.3px;top:235px;font-size:28px;color:#1f1f1f;letter-spacing:0.56px;">based available authentication patterns.</span>
<span class="t time" style="left:2379.3px;top:298px;font-size:20px;color:#9a9a9a;letter-spacing:0.86px;">02:46 PM</span>
</div><div class="msg user">
<div class="a bubble" style="left:2861px;top:341px;width:475px;height:83px;border-radius:16px;background:linear-gradient(135deg,#d3e9fe 0%,#a8d3fe 100%);box-shadow:0 3px 6px rgba(0,0,0,0.10)"></div>
<span class="t" style="left:2888.5px;top:371px;font-size:28px;color:#1f1f1f;letter-spacing:0.56px;">Show me recommended policies</span>
<div class="a avatar" style="left:3352px;top:361px;width:64px;height:64px;border-radius:50%;background:#579cf6"></div>
<svg class="ic " style="left:3366px;top:375px;width:36px;height:36px" viewBox="64 64 896 896" fill="#fff" fill-rule="evenodd" ><path d="M858.500 763.600a374 374 0 00-80.600-119.500 375.630 375.630 0 00-119.500-80.600c-.4-.2-.8-.3-1.200-.5C719.500 518 760 444.700 760 362c0-137-111-248-248-248S264 225 264 362c0 82.700 40.500 156 102.800 201.100-.4.200-.8.300-1.200.5-44.800 18.900-85 46-119.500 80.600a375.630 375.630 0 00-80.600 119.500A371.700 371.700 0 00136 901.800a8 8 0 008 8.200h60c4.400 0 7.900-3.500 8-7.800 2-77.200 33-149.500 87.800-204.300 56.700-56.700 132-87.900 212.200-87.900s155.500 31.200 212.200 87.900C779 752.700 810 825 812 902.200c.1 4.400 3.600 7.800 8 7.800h60a8 8 0 008-8.200c-1-47.800-10.900-94.300-29.500-138.200zM512 534c-45.900 0-89.100-17.900-121.600-50.400S340 407.900 340 362c0-45.900 17.900-89.100 50.400-121.600S466.100 190 512 190s89.100 17.900 121.600 50.400S684 316.100 684 362c0 45.900-17.900 89.100-50.400 121.600S557.900 534 512 534z"/></svg>
<span class="t time" style="left:3227.5px;top:434px;font-size:20px;color:#9a9a9a;letter-spacing:0.86px;">02:46 PM</span>
</div><div class="msg bot">
<div class="a bx bubble" style="left:2360px;top:475px;width:738px;height:131px;border:2px solid #e0e0e0;border-radius:14px;background:linear-gradient(135deg,#fff 0%,#f0f0f0 100%);box-shadow:0 2px 5px rgba(0,0,0,0.09)"></div>
<div class="a avatar" style="left:2280px;top:543px;width:64px;height:64px;border-radius:50%;background:#526ab4"></div>
<svg class="ic " style="left:2294px;top:557px;width:36px;height:36px" viewBox="64 64 896 896" fill="#fff" fill-rule="evenodd" ><path d="M300 328a60 60 0 10120 0 60 60 0 10-120 0zM852 64H172c-17.700 0-32 14.300-32 32v660c0 17.700 14.300 32 32 32h680c17.700 0 32-14.300 32-32V96c0-17.700-14.300-32-32-32zm-32 660H204V128h616v596zM604 328a60 60 0 10120 0 60 60 0 10-120 0zm250.200 556H169.800c-16.500 0-29.800 14.300-29.800 32v36c0 4.400 3.300 8 7.400 8h729.100c4.100 0 7.400-3.600 7.400-8v-36c.1-17.700-13.200-32-29.700-32zM664 508H360c-4.400 0-8 3.600-8 8v60c0 4.400 3.600 8 8 8h304c4.400 0 8-3.600 8-8v-60c0-4.400-3.600-8-8-8z"/></svg>
<span class="t" style="left:2389.8px;top:507px;font-size:28px;color:#1f1f1f;letter-spacing:0.62px;">I'll analyze your authentication patterns and</span>
<span class="t" style="left:2390px;top:551px;font-size:28px;color:#1f1f1f;letter-spacing:0.62px;">recommend policies...</span>
<span class="t time" style="left:2379.3px;top:614px;font-size:20px;color:#9a9a9a;letter-spacing:0.86px;">02:46 PM</span>
</div><div class="msg bot typing">
<div class="a bx bubble" style="left:2360px;top:657px;width:120px;height:83px;border:2px solid #e0e0e0;border-radius:14px;background:linear-gradient(135deg,#fff 0%,#f0f0f0 100%);box-shadow:0 2px 5px rgba(0,0,0,0.09)"></div>
<div class="a avatar" style="left:2280px;top:667px;width:64px;height:64px;border-radius:50%;background:#526ab4"></div>
<svg class="ic " style="left:2294px;top:681px;width:36px;height:36px" viewBox="64 64 896 896" fill="#fff" fill-rule="evenodd" ><path d="M300 328a60 60 0 10120 0 60 60 0 10-120 0zM852 64H172c-17.700 0-32 14.300-32 32v660c0 17.700 14.300 32 32 32h680c17.700 0 32-14.300 32-32V96c0-17.700-14.300-32-32-32zm-32 660H204V128h616v596zM604 328a60 60 0 10120 0 60 60 0 10-120 0zm250.200 556H169.800c-16.500 0-29.800 14.300-29.800 32v36c0 4.400 3.300 8 7.400 8h729.100c4.100 0 7.400-3.600 7.400-8v-36c.1-17.700-13.200-32-29.700-32zM664 508H360c-4.400 0-8 3.600-8 8v60c0 4.400 3.600 8 8 8h304c4.400 0 8-3.600 8-8v-60c0-4.400-3.600-8-8-8z"/></svg>
<div class="a dot" style="left:2399px;top:703px;width:2px;height:2px;background:#bcbcbc"></div>
<div class="a dot" style="left:2418px;top:702px;width:4px;height:4px;background:#a4a4a4"></div>
<div class="a dot" style="left:2434px;top:698px;width:12px;height:12px;border-radius:50%;background:#a9a9a9"></div>
</div>
<div class="a launcher" style="left:3312px;top:1694px;width:96px;height:96px;border-radius:50%;background:#2f6dad;box-shadow:0 2px 36px rgba(0,0,0,0.10)"></div>
<svg class="ic" style="left:3336px;top:1714px;width:48px;height:56px" viewBox="3336 1714 48 56"><path d="M3344 1717.700h32a5 5 0 0 1 5 5v43.400l-13.500-5.300h-23.500a5 5 0 0 1-5-5v-33.100a5 5 0 0 1 5-5z" fill="#fff"/><path d="M3345.700 1748.600q14.300 11.600 28.600 0" fill="none" stroke="#2f6dad" stroke-width="2.300" stroke-linecap="round"/></svg>
<div class="a shade" style="left:2248px;top:1770px;width:1200px;height:54px;background:linear-gradient(to bottom,rgba(0,0,0,0),rgba(0,0,0,0.07))"></div>
<svg class="ic" style="left:3428px;top:1804px;width:20px;height:20px" viewBox="3428 1804 20 20"><path d="M3448 1807q-1 11-6 17h6z" fill="#262626"/></svg>
</aside>
</body></html>
